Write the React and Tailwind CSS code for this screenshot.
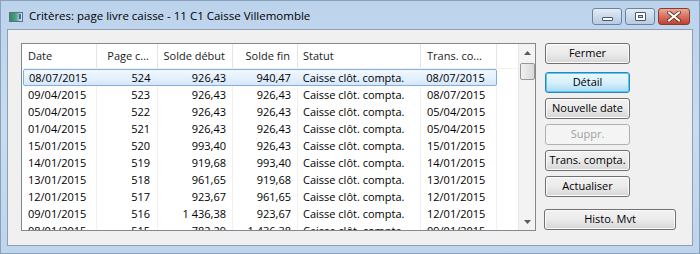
import React from "react";

const cols = [
  { w: "w-[75px]", align: "text-left pl-[6px]" },
  { w: "w-[61px]", align: "text-right pr-[8px]" },
  { w: "w-[75px]", align: "text-right pr-[7px]" },
  { w: "w-[65px]", align: "text-right pr-[7px]" },
  { w: "w-[123px]", align: "text-left pl-[5px]" },
  { w: "w-[76px]", align: "text-left pl-[6px]" },
];

const headers = ["Date", "Page c...", "Solde début", "Solde fin", "Statut", "Trans. co..."];

const rows = [
  ["08/07/2015", "524", "926,43", "940,47", "Caisse clôt. compta.", "08/07/2015"],
  ["09/04/2015", "523", "926,43", "926,43", "Caisse clôt. compta.", "08/07/2015"],
  ["05/04/2015", "522", "926,43", "926,43", "Caisse clôt. compta.", "05/04/2015"],
  ["01/04/2015", "521", "926,43", "926,43", "Caisse clôt. compta.", "05/04/2015"],
  ["15/01/2015", "520", "993,40", "926,43", "Caisse clôt. compta.", "15/01/2015"],
  ["14/01/2015", "519", "919,68", "993,40", "Caisse clôt. compta.", "14/01/2015"],
  ["13/01/2015", "518", "961,65", "919,68", "Caisse clôt. compta.", "13/01/2015"],
  ["12/01/2015", "517", "923,67", "961,65", "Caisse clôt. compta.", "12/01/2015"],
  ["09/01/2015", "516", "1 436,38", "923,67", "Caisse clôt. compta.", "12/01/2015"],
  ["08/01/2015", "515", "782,29", "1 436,38", "Caisse clôt. compta.", "09/01/2015"],
];

function WinButton({ children, className = "" }) {
  return (
    <div
      className={`h-[21px] rounded-[3px] border border-[#707070] bg-gradient-to-b from-[#f2f2f2] via-[#ebebeb] to-[#d6d6d6] flex items-center justify-center text-[11px] whitespace-nowrap text-black shadow-[inset_0_0_0_1px_#fcfcfc] ${className}`}
    >
      {children}
    </div>
  );
}

export default function App() {
  return (
    <div
      className="w-[700px] h-[254px] overflow-hidden flex flex-col bg-gradient-to-b from-[#bcd3ec] via-[#c9dcf0] to-[#bfd5ec] border border-[#8aa1bd]"
      style={{ fontFamily: '"Open Sans", "Noto Sans", sans-serif' }}
    >
      {/* title bar */}
      <div className="h-[28px] flex items-start shrink-0">
        <div className="mt-[11px] ml-[8px] w-[14px] h-[10px] border border-[#5d6f86] bg-gradient-to-r from-[#2f8a5a] via-[#4ea28a] to-[#dfe9f4] relative">
          <div className="absolute right-[1px] top-[1px] w-[2px] h-[5px] bg-[#3a6ea5]" />
        </div>
        <div className="ml-[6px] mt-[7px] text-[11.5px] leading-[16px] text-black">
          Critères: page livre caisse - 11 C1 Caisse Villemomble
        </div>
        <div className="ml-auto mt-[7px] mr-[9px] flex gap-[3px]">
          <div className="w-[30px] h-[17px] rounded-[3px] border border-[#6e82a0] bg-gradient-to-b from-[#e4ecf6] via-[#ccdaeb] to-[#b7cbe3] flex items-center justify-center">
            <div className="w-[11px] h-[4px] mt-[4px] bg-white border border-[#435775] rounded-[1px]" />
          </div>
          <div className="w-[30px] h-[17px] rounded-[3px] border border-[#6e82a0] bg-gradient-to-b from-[#e4ecf6] via-[#ccdaeb] to-[#b7cbe3] flex items-center justify-center">
            <div className="w-[11px] h-[9px] border border-[#435775] rounded-[1px] bg-white flex items-center justify-center">
              <div className="w-[5px] h-[3px] border border-[#435775] bg-[#c8d6e8]" />
            </div>
          </div>
          <div className="w-[32px] h-[17px] rounded-[3px] border border-[#8a3b30] bg-gradient-to-b from-[#e9a898] via-[#d6705f] to-[#c2402d] flex items-center justify-center">
            <svg width="14" height="11" viewBox="0 0 14 11">
              <path d="M2 1.5 L12 9.5 M12 1.5 L2 9.5" stroke="#5a2a22" strokeWidth="3.6" strokeLinecap="square" />
              <path d="M2 1.5 L12 9.5 M12 1.5 L2 9.5" stroke="#ffffff" strokeWidth="2" strokeLinecap="square" />
            </svg>
          </div>
        </div>
      </div>

      {/* client area */}
      <div className="mx-[6px] h-[217px] border border-[#8f9eb2] bg-[#f0f0f0] flex items-start pl-[13px] pt-[13px]">
        {/* list view */}
        <div className="w-[515px] h-[188px] border border-[#828790] bg-white flex text-[11px] text-black overflow-hidden">
          <div className="flex-1 flex flex-col overflow-hidden">
            <div className="h-[25px] flex shrink-0 bg-white border-b border-[#f0f0f0]">
              {headers.map((h, i) => (
                <div
                  key={h}
                  className={`${cols[i].w} ${cols[i].align} h-full leading-[24px] border-r border-[#e5e5e5] whitespace-nowrap text-[#1a1a1a]`}
                >
                  {h}
                </div>
              ))}
            </div>
            <div className="flex-1 relative overflow-hidden">
              <div className="absolute inset-0 flex pointer-events-none">
                {cols.map((c, i) => (
                  <div key={i} className={`${c.w} h-full border-r border-[#f0f0f0]`} />
                ))}
              </div>
              <div className="relative flex flex-col">
                {rows.map((r, ri) => (
                  <div
                    key={ri}
                    className={`h-[17px] flex shrink-0 ${
                      ri === 0
                        ? "ml-[1px] w-[474px] rounded-[2px] border border-[#84acdd] bg-gradient-to-b from-[#f2f8fe] to-[#d6e8fc]"
                        : ""
                    }`}
                  >
                    {r.map((v, ci) => (
                      <div
                        key={ci}
                        className={`${cols[ci].w} ${cols[ci].align} whitespace-nowrap ${
                          ri === 0 && ci === 0 ? "-ml-[1px]" : ""
                        } ${ri === 0 ? "leading-[15px]" : "leading-[17px]"}`}
                      >
                        {v}
                      </div>
                    ))}
                  </div>
                ))}
              </div>
            </div>
          </div>
          {/* scrollbar */}
          <div className="w-[17px] h-full bg-[#f3f3f3] border-l border-[#e8e8e8] flex flex-col items-center">
            <div className="h-[17px] w-full flex items-center justify-center">
              <svg width="7" height="4" viewBox="0 0 7 4">
                <path d="M0 4 L3.5 0 L7 4 Z" fill="#5a5a5a" />
              </svg>
            </div>
            <div className="w-[15px] h-[17px] mt-[2px] rounded-[2px] border border-[#979797] bg-gradient-to-r from-[#f1f1f1] to-[#d8d8d8]" />
            <div className="mt-auto h-[17px] w-full flex items-center justify-center">
              <svg width="7" height="4" viewBox="0 0 7 4">
                <path d="M0 0 L7 0 L3.5 4 Z" fill="#5a5a5a" />
              </svg>
            </div>
          </div>
        </div>

        {/* buttons */}
        <div className="ml-[9px] flex flex-col">
          <WinButton className="w-[85px]">Fermer</WinButton>
          <div className="mt-[8px] w-[85px] h-[21px] rounded-[3px] border border-[#3c7fb1] bg-gradient-to-b from-[#eaf6fd] via-[#d9f0fc] to-[#a7d9f5] flex items-center justify-center text-[11px] text-black shadow-[inset_0_0_0_1px_#48d0f8]">
            Détail
          </div>
          <WinButton className="w-[85px] mt-[5px]">Nouvelle date</WinButton>
          <div className="mt-[5px] w-[85px] h-[21px] rounded-[3px] border border-[#adb2b5] bg-[#f4f4f4] flex items-center justify-center text-[11px] text-[#a0a0a0]">
            Suppr.
          </div>
          <WinButton className="w-[85px] mt-[5px]">Trans. compta.</WinButton>
          <WinButton className="w-[85px] mt-[5px]">Actualiser</WinButton>
          <WinButton className="w-[132px] mt-[12px] -ml-[1px]">Histo. Mvt</WinButton>
        </div>
      </div>
    </div>
  );
}
